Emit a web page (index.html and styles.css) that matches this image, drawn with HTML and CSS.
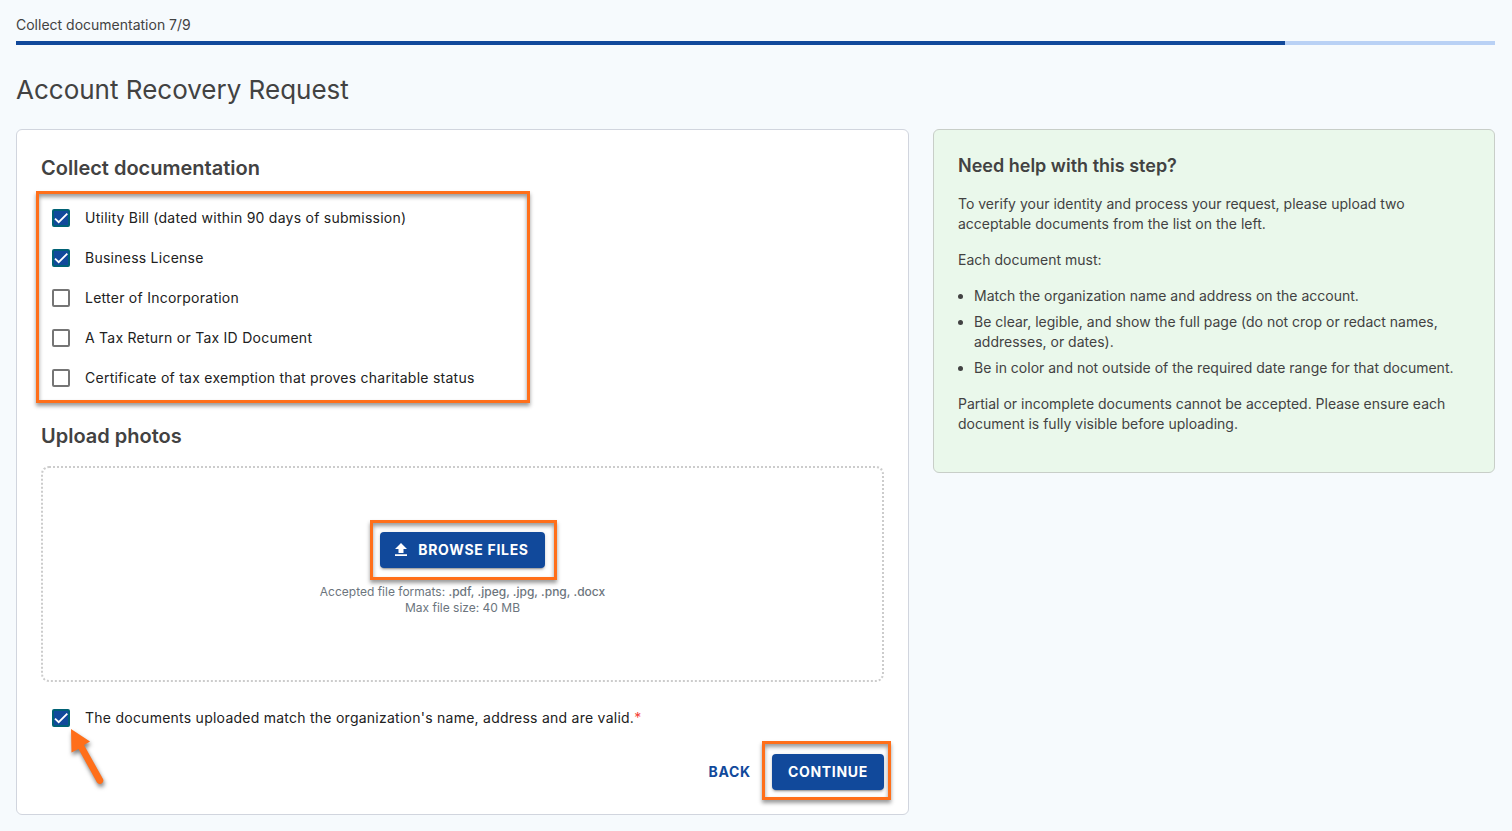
FILE: index.html
```
<!DOCTYPE html>
<html lang="en">
<head>
    <meta charset="UTF-8">
    <meta name="viewport" content="width=device-width, initial-scale=1.0">
    <title>Account Recovery Request</title>
    <link rel="stylesheet" href="styles.css">
</head>
<body>

    <header class="steps">
        <div class="step-label">Collect documentation 7/9</div>
        <div class="progress">
            <div class="progress-bar"></div>
        </div>
    </header>

    <h1>Account Recovery Request</h1>

    <main class="columns">
        <form class="card" id="documentsForm">
            <h2>Collect documentation</h2>
            <div class="doc-list highlight highlight-list">
                <div class="check-row">
                    <span class="check">
                        <input type="checkbox" id="utility" checked>
                        <svg viewBox="0 0 24 24"><path d="M1.73 12.91 8.1 19.28 22.79 4.59"/></svg>
                    </span>
                    <label for="utility">Utility Bill (dated within 90 days of submission)</label>
                </div>
                <div class="check-row">
                    <span class="check">
                        <input type="checkbox" id="license" checked>
                        <svg viewBox="0 0 24 24"><path d="M1.73 12.91 8.1 19.28 22.79 4.59"/></svg>
                    </span>
                    <label for="license">Business License</label>
                </div>
                <div class="check-row">
                    <span class="check">
                        <input type="checkbox" id="letter">
                        <svg viewBox="0 0 24 24"><path d="M1.73 12.91 8.1 19.28 22.79 4.59"/></svg>
                    </span>
                    <label for="letter">Letter of Incorporation</label>
                </div>
                <div class="check-row">
                    <span class="check">
                        <input type="checkbox" id="tax">
                        <svg viewBox="0 0 24 24"><path d="M1.73 12.91 8.1 19.28 22.79 4.59"/></svg>
                    </span>
                    <label for="tax">A Tax Return or Tax ID Document</label>
                </div>
                <div class="check-row">
                    <span class="check">
                        <input type="checkbox" id="certificate">
                        <svg viewBox="0 0 24 24"><path d="M1.73 12.91 8.1 19.28 22.79 4.59"/></svg>
                    </span>
                    <label for="certificate">Certificate of tax exemption that proves charitable status</label>
                </div>
            </div>

            <h2>Upload photos</h2>
            <div class="dropzone">
                <div class="highlight highlight-browse">
                    <button type="button" class="btn btn-browse">
                        <svg class="upload-icon" viewBox="0 0 12 13"><path d="M6 0 12 6H8.5V10H3.5V6H0ZM0 11.2H12V13H0Z"/></svg>
                        BROWSE FILES
                    </button>
                </div>
                <div class="formats">
                    Accepted file formats: <b>.pdf, .jpeg, .jpg, .png, .docx</b><br>
                    Max file size: 40 MB
                </div>
            </div>

            <div class="check-row confirm">
                <span class="check">
                    <input type="checkbox" id="confirm" checked>
                    <svg viewBox="0 0 24 24"><path d="M1.73 12.91 8.1 19.28 22.79 4.59"/></svg>
                </span>
                <label for="confirm">The documents uploaded match the organization's name, address and are valid.<span class="required">*</span></label>
                <svg class="arrow" viewBox="0 0 44 68">
                    <path d="M5 4 24 16.500 18 20 37 54A3.500 3.500 0 0 1 31 57.500L12.500 24 5.500 27.500Z"/>
                </svg>
            </div>

            <div class="actions">
                <button type="button" class="btn-text">BACK</button>
                <div class="highlight highlight-continue">
                    <button type="submit" class="btn">CONTINUE</button>
                </div>
            </div>
        </form>

        <aside class="help">
            <h3>Need help with this step?</h3>
            <p>To verify your identity and process your request, please upload two acceptable documents from the list on the left.</p>
            <p>Each document must:</p>
            <ul>
                <li>Match the organization name and address on the account.</li>
                <li>Be clear, legible, and show the full page (do not crop or redact names, addresses, or dates).</li>
                <li>Be in color and not outside of the required date range for that document.</li>
            </ul>
            <p>Partial or incomplete documents cannot be accepted. Please ensure each document is fully visible before uploading.</p>
        </aside>
    </main>

</body>
</html>
```
FILE: styles.css
```
*, *::after {
    box-sizing: border-box;
}
body {
    font-family: Inter, "Liberation Sans", sans-serif;
    font-size: 14px;
    line-height: 20px;
    color: #424242;
    background: #f6fafd;
    margin: 0;
    padding: 15px 17px 16px 16px;
}
h1, h2, h3, p, ul {
    margin: 0;
}
.progress {
    height: 4px;
    margin-top: 6px;
    background: #b9d1f5;
}
.progress-bar {
    width: 85.8%;
    height: 4px;
    background: #11499b;
}
h1 {
    font-size: 26px;
    font-weight: 400;
    line-height: 36px;
    margin: 27px 0 21px;
}
.columns {
    display: grid;
    grid-template-columns: 893fr 562fr;
    gap: 24px;
    align-items: start;
}
.card {
    background: white;
    border: 1px solid #d1d5de;
    border-radius: 6px;
    padding: 24px;
}
h2 {
    font-size: 20px;
    font-weight: 600;
    line-height: 28px;
}
.doc-list {
    margin: 16px 0 24px;
}
.check-row {
    display: flex;
    align-items: center;
    height: 40px;
    padding-left: 11px;
    gap: 15px;
    color: #212121;
    letter-spacing: 0.0178em;
}
.check {
    position: relative;
    width: 18px;
    height: 18px;
}
.check input {
    appearance: none;
    display: block;
    width: 18px;
    height: 18px;
    margin: 0;
    border: 2px solid #757575;
    border-radius: 2px;
    cursor: pointer;
}
.check input:checked {
    background: #11499b;
    border-color: #006175;
}
.check svg {
    display: none;
    position: absolute;
    inset: 2px;
    fill: none;
    stroke: white;
    stroke-width: 3.12;
    pointer-events: none;
}
.check input:checked + svg {
    display: block;
}
.required {
    color: #f44336;
}

/* orange callouts drawn over the form */
.highlight {
    position: relative;
}
.highlight::after {
    content: "";
    position: absolute;
    border: 3px solid #ff6f1a;
    box-shadow: 0 3px 4px rgba(0, 0, 0, 0.4), inset 0 3px 4px rgba(0, 0, 0, 0.4);
    pointer-events: none;
}
.highlight-list::after {
    top: -7px;
    bottom: -5px;
    left: -5px;
    width: 494px;
}
.highlight-browse::after {
    inset: -12px -12px -12px -10px;
}
.highlight-continue::after {
    inset: -13px -7px -10px -10px;
}
.arrow {
    position: absolute;
    left: 25px;
    top: 27px;
    width: 44px;
    height: 68px;
    fill: #ff6f1a;
    filter: drop-shadow(1px 3px 2px rgba(0, 0, 0, 0.5));
    pointer-events: none;
}

.dropzone {
    display: flex;
    flex-direction: column;
    align-items: center;
    justify-content: center;
    gap: 16px;
    min-height: 216px;
    margin: 16px 0;
    border: 2px dotted #ccc;
    border-radius: 8px;
}
.formats {
    font-size: 12px;
    line-height: 16px;
    text-align: center;
    color: #6c757d;
}
.formats b {
    font-weight: 500;
}
.confirm {
    position: relative;
    margin-bottom: 16px;
}
button {
    font-family: inherit;
    font-size: 14px;
    font-weight: 700;
    letter-spacing: 0.05em;
    height: 36px;
    border: none;
    border-radius: 4px;
    cursor: pointer;
}
.btn {
    display: flex;
    align-items: center;
    padding: 0 16px 2px;
    background: #11499b;
    color: white;
    box-shadow: 0 3px 1px -2px rgba(0, 0, 0, 0.2), 0 2px 2px rgba(0, 0, 0, 0.14), 0 1px 5px rgba(0, 0, 0, 0.12);
}
.btn-browse {
    gap: 11px;
    padding-left: 15px;
}
.upload-icon {
    width: 12px;
    height: 13px;
    fill: white;
}
.btn-text {
    background: none;
    color: #11499b;
    padding: 0 8px 2px;
}
.actions {
    display: flex;
    justify-content: flex-end;
    gap: 13px;
}

.help {
    background: #eaf8eb;
    border: 1px solid #c8cec8;
    border-radius: 6px;
    padding: 24px 24px 38px;
}
h3 {
    font-size: 18px;
    font-weight: 600;
    line-height: 24px;
}
.help p, .help ul {
    margin-top: 16px;
}
.help ul {
    padding-left: 16px;
}
.help li + li {
    margin-top: 6px;
}
@media (max-width: 900px) {
    .columns {
        grid-template-columns: 1fr;
    }
}
```
